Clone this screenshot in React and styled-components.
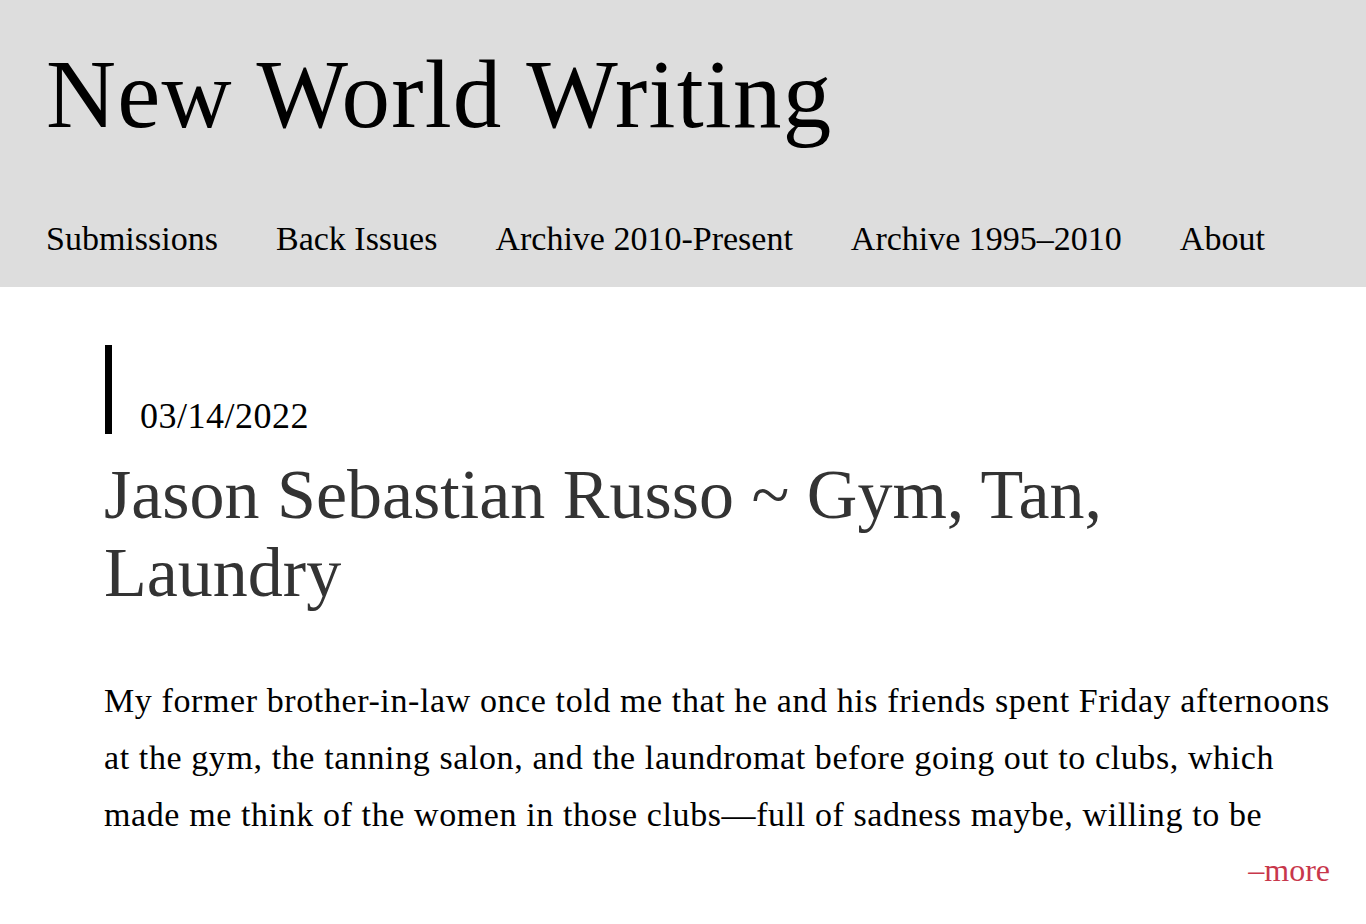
import React from 'react';
import styled, { createGlobalStyle } from 'styled-components';

const GlobalStyle = createGlobalStyle`
    html, body {
        margin: 0;
        padding: 0;
        background: #ffffff;
    }
    body {
        font-family: "Liberation Serif", "Times New Roman", serif;
        color: #000;
    }
`;

const Header = styled.header`
    background-color: #dddddd;
    padding: 46px 0 31px 46px;
`;

const SiteTitle = styled.h1`
    margin: 0;
    font-size: 97px;
    font-weight: normal;
    line-height: 1;
    letter-spacing: 1.2px;
    color: #000;
`;

const Nav = styled.nav`
    display: flex;
    gap: 58px;
    margin-top: 79px;
`;

const NavLink = styled.a`
    font-size: 34px;
    line-height: 1;
    color: #000;
    text-decoration: none;
`;

const Main = styled.main`
    padding: 58px 36px 40px 105px;
`;

const DateBlock = styled.div`
    border-left: 7px solid #000;
    padding: 53px 0 0 28px;
    font-size: 36px;
    line-height: 1;
    letter-spacing: 0.5px;
`;

const PostTitle = styled.h2`
    margin: 22px 0 0 -1px;
    font-size: 70px;
    font-weight: normal;
    line-height: 78px;
    color: #333333;
`;

const Excerpt = styled.p`
    margin: 60px 0 0 -1px;
    font-size: 34px;
    line-height: 57px;
    letter-spacing: 0.6px;
    color: #000;
`;

const More = styled.a`
    display: block;
    margin-top: 11px;
    text-align: right;
    font-size: 32px;
    line-height: 1;
    color: #c8374b;
    text-decoration: none;
`;

const links = ['Submissions', 'Back Issues', 'Archive 2010-Present', 'Archive 1995–2010', 'About'];

function App() {
    return (
        <div>
            <GlobalStyle />
            <Header>
                <SiteTitle>New World Writing</SiteTitle>
                <Nav>
                    {links.map((l) => (
                        <NavLink href="#" key={l}>{l}</NavLink>
                    ))}
                </Nav>
            </Header>
            <Main>
                <DateBlock>03/14/2022</DateBlock>
                <PostTitle>Jason Sebastian Russo ~ Gym, Tan, Laundry</PostTitle>
                <Excerpt>
                    My former brother-in-law once told me that he and his friends spent Friday afternoons at the gym, the tanning salon, and the laundromat before going out to clubs, which made me think of the women in those clubs—full of sadness maybe, willing to be
                </Excerpt>
                <More href="#">–more</More>
            </Main>
        </div>
    );
}

export default App;
